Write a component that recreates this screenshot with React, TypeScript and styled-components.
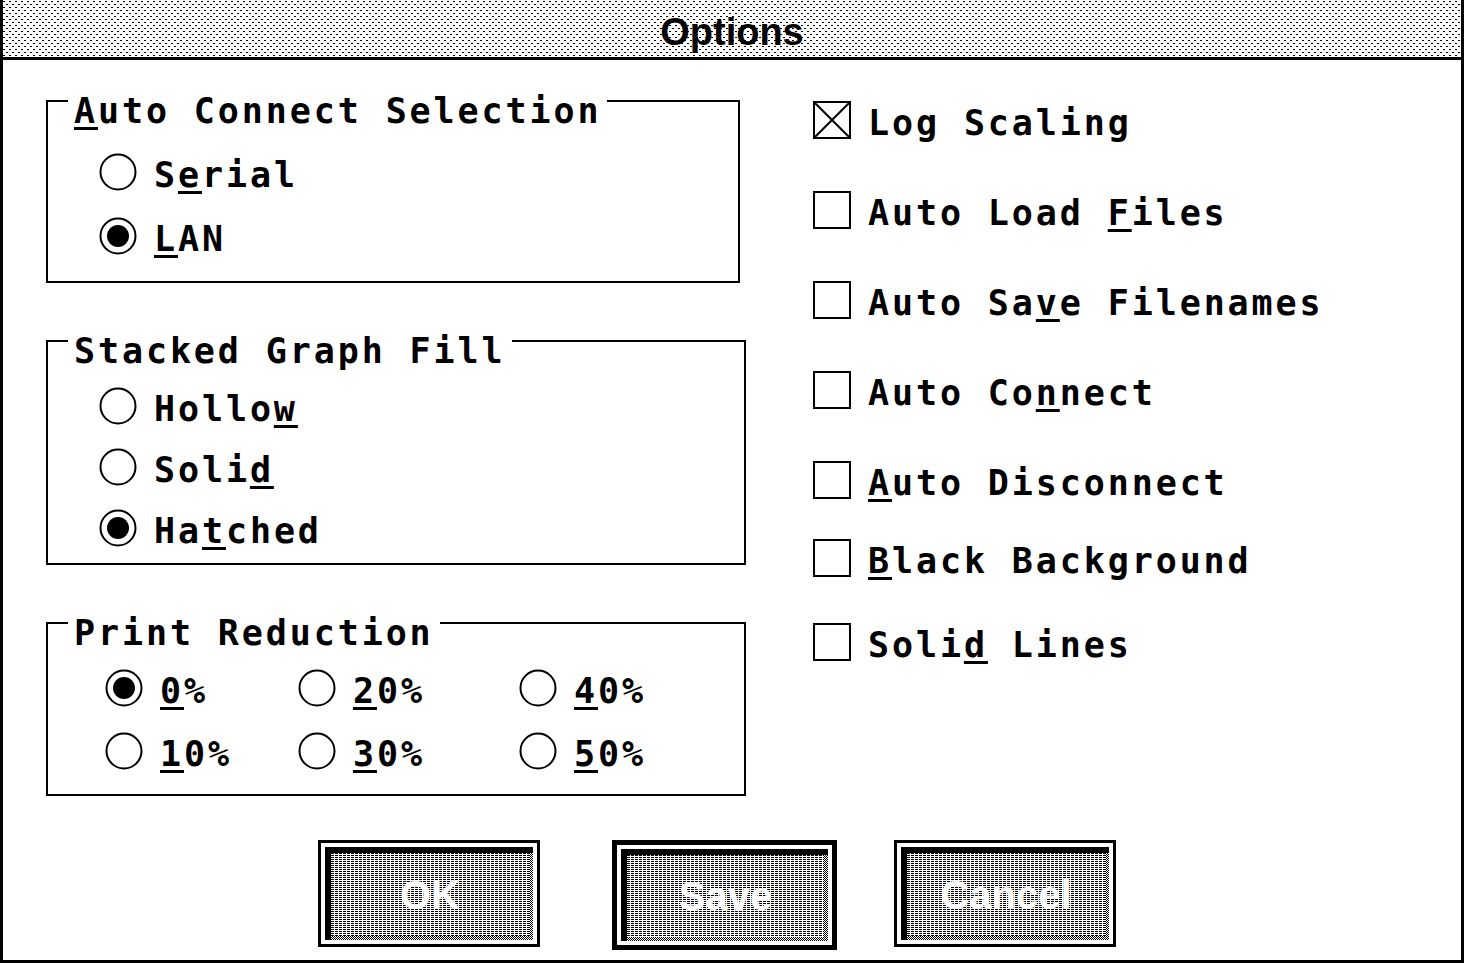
import React from "react";
import styled, { createGlobalStyle } from "styled-components";

const svgUrl = (body: string, w: number, h: number) =>
  `url("data:image/svg+xml,${encodeURIComponent(
    `<svg xmlns='http://www.w3.org/2000/svg' width='${w}' height='${h}' shape-rendering='crispEdges'>${body}</svg>`
  )}")`;

// 1-bit dither tiles, like the old GUI used
const titleDither = svgUrl(
  "<rect width='6' height='6' fill='white'/><rect x='0' y='1' width='2' height='1' fill='black'/><rect x='3' y='4' width='2' height='1' fill='black'/>",
  6,
  6
);
const checker = svgUrl(
  "<rect width='2' height='2' fill='white'/><rect width='1' height='1' fill='black'/><rect x='1' y='1' width='1' height='1' fill='black'/>",
  2,
  2
);
const faceLines = svgUrl(
  "<rect width='4' height='2' fill='white'/><rect width='3' height='1' fill='black'/>",
  4,
  2
);

const mono = `"DejaVu Sans Mono", "Liberation Mono", monospace`;

const GlobalStyle = createGlobalStyle`
  body {
    margin: 0;
    background: #fff;
    font-family: ${mono};
    color: #000;
  }
`;

const Window = styled.div`
  width: 1464px;
  height: 963px;
  box-sizing: border-box;
  border: 3px solid #000;
  border-top: 0;
  display: flex;
  flex-direction: column;
  background: #fff;
  overflow: hidden;
`;

const TitleBar = styled.div`
  height: 60px;
  flex-shrink: 0;
  box-sizing: border-box;
  padding-top: 6px;
  border-bottom: 3px solid #000;
  background-image: ${titleDither};
  display: flex;
  align-items: center;
  justify-content: center;
  font-family: "Liberation Sans", Arial, sans-serif;
  font-weight: bold;
  font-size: 38px;
  line-height: 1;
`;

const Columns = styled.div`
  display: flex;
  padding-left: 43px;
`;

const LeftColumn = styled.div`
  width: 700px;
  display: flex;
  flex-direction: column;
  padding-top: 40px;
`;

const RightColumn = styled.div`
  display: flex;
  flex-direction: column;
  margin-left: 67px;
  padding-top: 41px;
`;

const Group = styled.div<{ $width: number; $top: number; $bottom: number }>`
  width: ${(p) => p.$width}px;
  box-sizing: border-box;
  border: 2px solid #000;
  margin-top: ${(p) => p.$top}px;
  padding-bottom: ${(p) => p.$bottom}px;
`;

const Legend = styled.div`
  width: fit-content;
  box-sizing: border-box;
  margin: -10px 0 0 20px;
  padding: 2px 6px 0;
  height: 35px;
  background: #fff;
  font-size: 35px;
  font-weight: bold;
  letter-spacing: 2.9px;
  line-height: 35px;
  white-space: pre;
`;

const OptionList = styled.div<{ $top: number; $gap: number }>`
  display: flex;
  flex-direction: column;
  gap: ${(p) => p.$gap}px;
  margin-top: ${(p) => p.$top}px;
  padding-left: 51px;
`;

const OptionGrid = styled.div`
  display: grid;
  grid-template-columns: 193px 221px auto;
  row-gap: 25px;
  margin-top: 20px;
  padding-left: 57px;
`;

const OptionRow = styled.div`
  display: flex;
  align-items: center;
  gap: 17px;
  height: 38px;
`;

const Label = styled.span`
  padding-top: 6px;
  font-size: 35px;
  font-weight: bold;
  letter-spacing: 2.9px;
  line-height: 35px;
  white-space: pre;
`;

const U = styled.span`
  text-decoration: underline;
  text-decoration-thickness: 3px;
  text-underline-offset: 4px;
`;

const CheckRow = styled.div<{ $top: number }>`
  display: flex;
  align-items: center;
  gap: 17px;
  height: 38px;
  margin-top: ${(p) => p.$top}px;
`;

const Box = styled.div`
  width: 38px;
  height: 38px;
  box-sizing: border-box;
  border: 2px solid #000;
  display: flex;
`;

const ButtonRow = styled.div`
  display: flex;
  align-items: flex-start;
  margin-top: 44px;
  padding-left: 315px;
`;

const Button = styled.div<{ $w: number; $h: number; $frame: number; $left: number }>`
  width: ${(p) => p.$w}px;
  height: ${(p) => p.$h}px;
  margin-left: ${(p) => p.$left}px;
  box-sizing: border-box;
  border: ${(p) => p.$frame}px solid #000;
  padding: 4px;
  background: #fff;
  display: flex;
`;

const Face = styled.div`
  flex: 1;
  display: flex;
  border-top: 6px solid #000;
  border-left: 6px solid #000;
  padding: 0 4px 4px 0;
  background-image: ${checker};
`;

const FaceInner = styled.div`
  flex: 1;
  display: flex;
  align-items: center;
  justify-content: center;
  background-image: ${faceLines};
  color: #fff;
  font-family: "Liberation Sans", Arial, sans-serif;
  font-weight: bold;
  font-size: 40px;
  line-height: 1;
`;

const Radio = ({ checked, children }: { checked?: boolean; children: React.ReactNode }) => (
  <OptionRow>
    <svg width="38" height="38" viewBox="0 0 38 38">
      <circle cx="19" cy="19" r="17.5" fill="none" stroke="#000" strokeWidth="2" />
      {checked && <circle cx="19" cy="19" r="11" fill="#000" />}
    </svg>
    <Label>{children}</Label>
  </OptionRow>
);

const Check = ({ checked, top, children }: { checked?: boolean; top: number; children: React.ReactNode }) => (
  <CheckRow $top={top}>
    <Box>
      {checked && (
        <svg width="34" height="34" viewBox="0 0 34 34">
          <path d="M0 0L34 34M34 0L0 34" stroke="#000" strokeWidth="2" />
        </svg>
      )}
    </Box>
    <Label>{children}</Label>
  </CheckRow>
);

export default function App() {
  return (
    <>
      <GlobalStyle />
      <Window>
        <TitleBar>Options</TitleBar>
        <Columns>
          <LeftColumn>
            <Group $width={694} $top={0} $bottom={26}>
              <Legend>
                <U>A</U>uto Connect Selection
              </Legend>
              <OptionList $top={26} $gap={26}>
                <Radio>
                  S<U>e</U>rial
                </Radio>
                <Radio checked>
                  <U>L</U>AN
                </Radio>
              </OptionList>
            </Group>

            <Group $width={700} $top={57} $bottom={16}>
              <Legend>Stacked Graph Fill</Legend>
              <OptionList $top={20} $gap={23}>
                <Radio>
                  Hollo<U>w</U>
                </Radio>
                <Radio>
                  Soli<U>d</U>
                </Radio>
                <Radio checked>
                  Ha<U>t</U>ched
                </Radio>
              </OptionList>
            </Group>

            <Group $width={700} $top={57} $bottom={24}>
              <Legend>Print Reduction</Legend>
              <OptionGrid>
                <Radio checked>
                  <U>0</U>%
                </Radio>
                <Radio>
                  <U>2</U>0%
                </Radio>
                <Radio>
                  <U>4</U>0%
                </Radio>
                <Radio>
                  <U>1</U>0%
                </Radio>
                <Radio>
                  <U>3</U>0%
                </Radio>
                <Radio>
                  <U>5</U>0%
                </Radio>
              </OptionGrid>
            </Group>
          </LeftColumn>

          <RightColumn>
            <Check checked top={0}>
              Log Scaling
            </Check>
            <Check top={52}>
              Auto Load <U>F</U>iles
            </Check>
            <Check top={52}>
              Auto Sa<U>v</U>e Filenames
            </Check>
            <Check top={52}>
              Auto Co<U>n</U>nect
            </Check>
            <Check top={52}>
              <U>A</U>uto Disconnect
            </Check>
            <Check top={40}>
              <U>B</U>lack Background
            </Check>
            <Check top={46}>
              Soli<U>d</U> Lines
            </Check>
          </RightColumn>
        </Columns>

        <ButtonRow>
          <Button $w={222} $h={107} $frame={3} $left={0}>
            <Face>
              <FaceInner>OK</FaceInner>
            </Face>
          </Button>
          <Button $w={225} $h={110} $frame={5} $left={72}>
            <Face>
              <FaceInner>Save</FaceInner>
            </Face>
          </Button>
          <Button $w={222} $h={107} $frame={3} $left={57}>
            <Face>
              <FaceInner>Cancel</FaceInner>
            </Face>
          </Button>
        </ButtonRow>
      </Window>
    </>
  );
}
